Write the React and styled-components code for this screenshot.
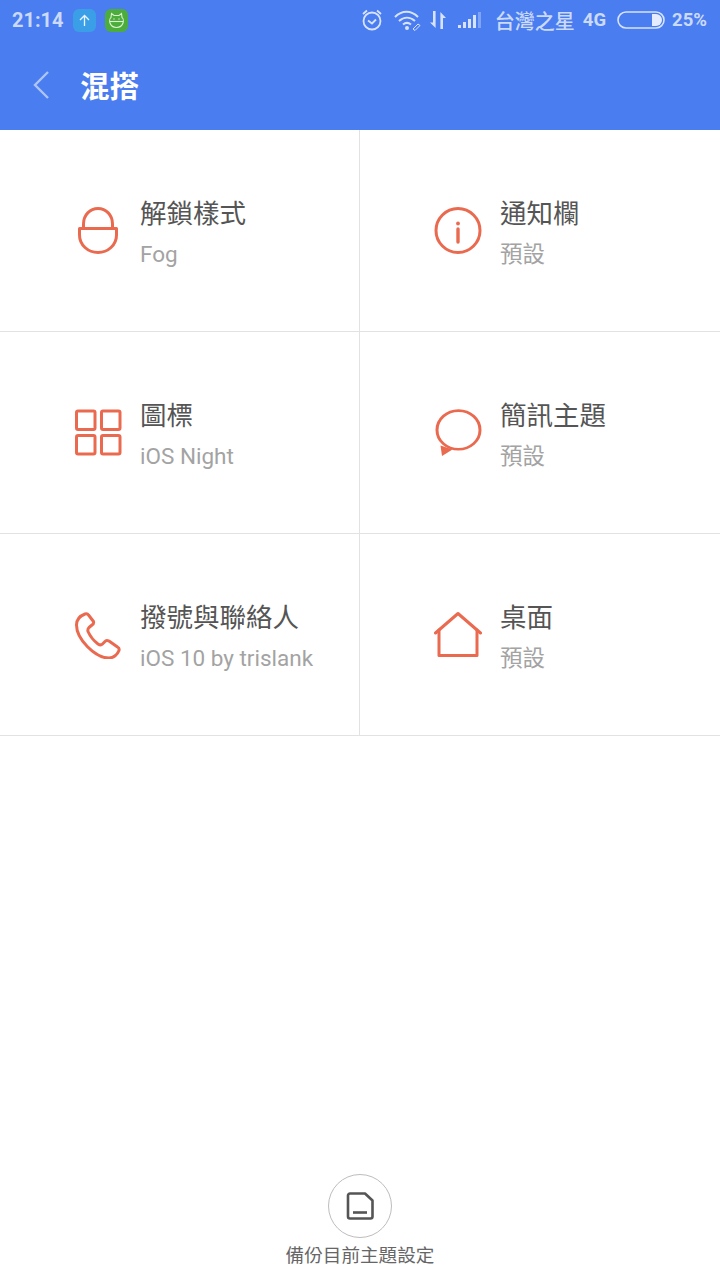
import React from "react";
import styled, { createGlobalStyle } from "styled-components";

const GlobalStyle = createGlobalStyle`
  html, body {
    margin: 0;
    padding: 0;
    background: #fff;
  }
  * {
    box-sizing: border-box;
  }
`;

const FONT = `Roboto, "Noto Sans CJK TC", sans-serif`;
const ACCENT = "#ea6a50";

const Page = styled.div`
  width: 720px;
  height: 1280px;
  display: flex;
  flex-direction: column;
  background: #fff;
  font-family: ${FONT};
`;

const Header = styled.header`
  height: 130px;
  background: #4a7df0;
  display: flex;
  flex-direction: column;
`;

const StatusBar = styled.div`
  height: 40px;
  padding: 0 13px 0 12px;
  display: flex;
  align-items: center;
  justify-content: space-between;
  color: rgba(255, 255, 255, 0.72);
  font-weight: 700;
  font-size: 20px;
`;

const StatusGroup = styled.div`
  display: flex;
  align-items: center;
`;

const Clock = styled.span`
  margin-right: 9px;
`;

const AppBadge = styled.span`
  width: 23px;
  height: 23px;
  border-radius: 6px;
  margin-right: 9px;
  background: ${(p) => p.$color};
  display: flex;
  align-items: center;
  justify-content: center;
`;

const StatusIcon = styled.svg`
  display: block;
  margin-left: ${(p) => p.$left || 0}px;
`;

const StatusText = styled.span`
  margin-left: ${(p) => p.$left}px;
  font-size: ${(p) => p.$size || 18.5}px;
  font-weight: ${(p) => p.$weight || 700};
`;

const TitleBar = styled.div`
  height: 90px;
  padding: 0 0 2px 33px;
  display: flex;
  align-items: center;
  gap: 31px;
`;

const BackIcon = styled.svg`
  display: block;
  margin-top: 2px;
  fill: none;
  stroke: rgba(255, 255, 255, 0.55);
  stroke-width: 2.4;
`;

const Title = styled.h1`
  margin: 0;
  color: #fff;
  font-size: 29.5px;
  font-weight: 700;
`;

const Grid = styled.main`
  display: grid;
  grid-template-columns: 360px 360px;
  grid-auto-rows: 202px;
`;

const Cell = styled.div`
  display: flex;
  align-items: center;
  gap: 18px;
  padding-left: 74px;
  border-bottom: 1px solid #e2e2e2;
  border-right: ${(p) => (p.$left ? "1px solid #e2e2e2" : "none")};
`;

const CellIcon = styled.svg`
  flex: none;
  display: block;
  fill: none;
  stroke: ${ACCENT};
  stroke-width: 3;
  stroke-linejoin: round;
  stroke-linecap: round;
`;

const CellText = styled.div`
  display: flex;
  flex-direction: column;
  gap: 7px;
  padding-top: 4px;
`;

const CellTitle = styled.div`
  font-size: 26.5px;
  line-height: 36px;
  color: #555;
`;

const CellValue = styled.div`
  font-size: 22.5px;
  line-height: 30px;
  color: #a3a3a3;
`;

const Footer = styled.footer`
  margin-top: auto;
  padding-bottom: 9px;
  display: flex;
  flex-direction: column;
  align-items: center;
  gap: 3px;
`;

const BackupButton = styled.div`
  width: 64px;
  height: 64px;
  border: 1px solid #bdbdbd;
  border-radius: 50%;
  display: flex;
  align-items: center;
  justify-content: center;
`;

const BackupLabel = styled.div`
  font-size: 18.6px;
  line-height: 30px;
  color: #666;
`;

const LockIcon = () => (
  <CellIcon width="48" height="48" viewBox="0 0 48 48">
    <path d="M9.5 21.5V17C9.5 8 16 1.5 24 1.5S38.5 8 38.5 17v4.5" />
    <path d="M5.5 21.5h37V28C42.5 38 34 45.5 24 45.5S5.5 38 5.5 28z" />
  </CellIcon>
);

const InfoIcon = () => (
  <CellIcon width="48" height="48" viewBox="0 0 48 48">
    <circle cx="24" cy="23.5" r="22" />
    <path d="M24 22v13" strokeWidth="3.4" />
    <circle cx="24" cy="16.5" r="1.9" fill={ACCENT} stroke="none" />
  </CellIcon>
);

const TilesIcon = () => (
  <CellIcon width="48" height="48" viewBox="0 0 48 48">
    <rect x="2.5" y="2" width="18.5" height="18.5" rx="1.5" />
    <rect x="27.5" y="2" width="18.5" height="18.5" rx="1.5" />
    <rect x="2.5" y="26.5" width="18.5" height="18.5" rx="1.5" />
    <rect x="27.5" y="26.5" width="18.5" height="18.5" rx="1.5" />
  </CellIcon>
);

const BubbleIcon = () => (
  <CellIcon width="48" height="48" viewBox="0 0 48 48">
    <circle cx="24.5" cy="21" r="21.5" transform="translate(0 2) scale(1 .9)" />
    <path d="M6.5 36.5L8 47l10.5-6.500z" fill={ACCENT} stroke="none" />
  </CellIcon>
);

const PhoneIcon = () => (
  <CellIcon width="48" height="48" viewBox="0 0 48 48">
    <path d="M11 3C7 4.500 2.500 8 2.500 14 2.500 28 21 47 35 47 39.500 47 43.500 43.500 45 39.500 45.500 37.500 44.500 36.500 43.500 36L35 30C33 29 32 29 31 30.500L28.500 33C27 34.500 25.500 34 24 33 20 30 16.500 26 14 20.500 13.500 18.500 14 17.500 15 16.500L18 14C19.500 13 20 12 19.500 10.500L14.500 4C13.500 2.500 12.500 2.500 11 3z" />
  </CellIcon>
);

const HouseIcon = () => (
  <CellIcon width="48" height="48" viewBox="0 0 48 48">
    <path d="M1.5 22L24 2.500 46.500 22" />
    <path d="M5 19v25.500h38V19" />
  </CellIcon>
);

const items = [
  { title: "解鎖樣式", value: "Fog", Icon: LockIcon },
  { title: "通知欄", value: "預設", Icon: InfoIcon },
  { title: "圖標", value: "iOS Night", Icon: TilesIcon },
  { title: "簡訊主題", value: "預設", Icon: BubbleIcon },
  { title: "撥號與聯絡人", value: "iOS 10 by trislank", Icon: PhoneIcon },
  { title: "桌面", value: "預設", Icon: HouseIcon },
];

const App = () => (
  <Page>
    <GlobalStyle />
    <Header>
      <StatusBar>
        <StatusGroup>
          <Clock>21:14</Clock>
          <AppBadge $color="#3a9fe6">
            <svg width="13" height="13" viewBox="0 0 13 13" fill="none" stroke="#e8f4ff" strokeWidth="1.3">
              <path d="M6.500 12V1.500M2 6l4.500-4.500L11 6" />
            </svg>
          </AppBadge>
          <AppBadge $color="#4cad3c">
            <svg width="17" height="17" viewBox="0 0 17 17" fill="none" stroke="#d9f2d0" strokeWidth="1.1">
              <path d="M3.500 1.500L6 3.500h5l2.500-2 .5 4c1.500 1 1.500 4 1 5.500-1 3-4 4.500-6.500 4.500S3 14 2 11c-.5-1.500-.5-4.500 1-5.500z" />
              <path d="M1.800 9.500h13.400" />
              <circle cx="6" cy="7" r=".7" fill="#d9f2d0" stroke="none" />
              <circle cx="11" cy="7" r=".7" fill="#d9f2d0" stroke="none" />
            </svg>
          </AppBadge>
        </StatusGroup>
        <StatusGroup>
          <StatusIcon width="22" height="24" viewBox="0 0 22 24" fill="none" stroke="rgba(255,255,255,.78)" strokeWidth="1.8">
            <circle cx="11" cy="13" r="8.500" />
            <path d="M7 12.500l4 3 4-4M2 6l4-3.500M20 6l-4-3.500" />
          </StatusIcon>
          <StatusIcon $left={11} width="27" height="22" viewBox="0 0 27 22" fill="none" stroke="rgba(255,255,255,.78)" strokeWidth="2">
            <path d="M1 8c7-7 16-7 23 0M5 12c5-4.500 11-4.500 16 0M9 15.500c2.500-2 5.500-2 8 0" />
            <circle cx="13" cy="19" r="2" fill="rgba(255,255,255,.78)" stroke="none" />
            <path d="M19 20l5-5 2 1.500-5 5z" strokeWidth="1" />
          </StatusIcon>
          <StatusIcon $left={8} width="18" height="20" viewBox="0 0 18 20" fill="rgba(255,255,255,.78)">
            <path d="M4 1h2.600v17L1 12.500h3z" />
            <path d="M11.400 2L17 8h-3v11h-2.600z" />
          </StatusIcon>
          <StatusIcon $left={11} width="25" height="18" viewBox="0 0 25 18">
            <rect x="0" y="14" width="3" height="3" fill="rgba(255,255,255,.78)" />
            <rect x="5" y="11" width="3" height="6" fill="rgba(255,255,255,.78)" />
            <rect x="10" y="8" width="3" height="9" fill="rgba(255,255,255,.78)" />
            <rect x="15" y="4" width="3" height="13" fill="rgba(255,255,255,.78)" />
            <rect x="20" y="1" width="3" height="16" fill="rgba(255,255,255,.3)" />
          </StatusIcon>
          <StatusText $left={12} $size={20} $weight={500}>台灣之星</StatusText>
          <StatusText $left={8}>4G</StatusText>
          <StatusIcon $left={11} width="48" height="18" viewBox="0 0 48 18" fill="none">
            <rect x="1" y="1" width="46" height="16" rx="8" stroke="rgba(255,255,255,.78)" strokeWidth="1.6" />
            <path d="M35 3h4a6 6 0 0 1 0 12h-4z" fill="rgba(255,255,255,.85)" />
          </StatusIcon>
          <StatusText $left={7}>25%</StatusText>
        </StatusGroup>
      </StatusBar>
      <TitleBar>
        <BackIcon width="16" height="28" viewBox="0 0 16 28">
          <path d="M15 1L2 14l13 13" />
        </BackIcon>
        <Title>混搭</Title>
      </TitleBar>
    </Header>
    <Grid>
      {items.map(({ title, value, Icon }, i) => (
        <Cell key={title} $left={i % 2 === 0}>
          <Icon />
          <CellText>
            <CellTitle>{title}</CellTitle>
            <CellValue>{value}</CellValue>
          </CellText>
        </Cell>
      ))}
    </Grid>
    <Footer>
      <BackupButton>
        <svg width="28" height="28" viewBox="0 0 28 28" fill="none" stroke="#555" strokeWidth="2.6" strokeLinejoin="round">
          <path d="M4 1.500h15l7.500 7v16a2 2 0 0 1-2 2H4a2 2 0 0 1-2-2v-21a2 2 0 0 1 2-2z" />
          <path d="M7 20.500h14" />
        </svg>
      </BackupButton>
      <BackupLabel>備份目前主題設定</BackupLabel>
    </Footer>
  </Page>
);

export default App;
